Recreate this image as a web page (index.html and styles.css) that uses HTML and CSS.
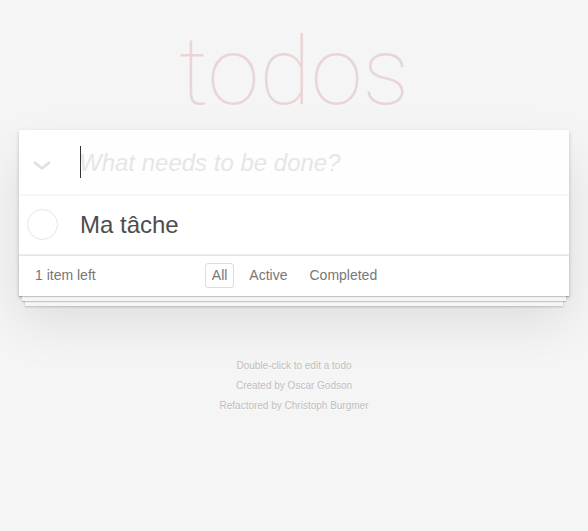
FILE: index.html
```html
<!DOCTYPE html>
<html lang="fr">
<head>
<meta charset="utf-8">
<title>todos</title>
<link rel="stylesheet" href="styles.css">
</head>
<body>
<div class="page">
  <h1 class="title">todos</h1>
  <section class="todoapp">
    <header class="header">
      <div class="toggle-all">
        <svg width="18" height="9" viewBox="0 0 18 9"><path d="M1.2 1 L9 7.4 L16.8 1" fill="none" stroke="#e0e0e0" stroke-width="2.6" stroke-linejoin="miter"/></svg>
      </div>
      <div class="input-wrap">
        <span class="caret"></span>
        <input class="new-todo" placeholder="What needs to be done?">
      </div>
    </header>
    <ul class="todo-list">
      <li class="todo">
        <div class="toggle"><span class="circle"></span></div>
        <label class="todo-label">Ma tâche</label>
      </li>
    </ul>
    <footer class="footer">
      <span class="todo-count">1 item left</span>
      <ul class="filters">
        <li><a class="filter selected">All</a></li>
        <li><a class="filter">Active</a></li>
        <li><a class="filter">Completed</a></li>
      </ul>
      <span class="spacer"></span>
    </footer>
  </section>
  <footer class="info">
    <p class="info-line">Double-click to edit a todo</p>
    <p class="info-line">Created by <a class="info-link">Oscar Godson</a></p>
    <p class="info-line">Refactored by <a class="info-link">Christoph Burgmer</a></p>
  </footer>
</div>
</body>
</html>
```
FILE: styles.css
```css
html, body {
  margin: 0;
  padding: 0;
}
body {
  font: 14px "Liberation Sans", Arial, sans-serif;
  line-height: 1.4em;
  background: #f5f5f5;
  color: #4d4d4d;
}
.page {
  width: 550px;
  margin: 0 auto;
  padding-top: 22px;
}
.title {
  margin: 0;
  font-family: Roboto, "Liberation Sans", sans-serif;
  font-size: 94px;
  font-weight: 100;
  line-height: 100px;
  text-align: center;
  color: rgba(175, 47, 47, 0.16);
}
.todoapp {
  background: #fff;
  margin: 8px 0 40px 0;
  box-shadow: 0 2px 4px 0 rgba(0, 0, 0, 0.2), 0 25px 50px 0 rgba(0, 0, 0, 0.1);
}
.header {
  display: flex;
  align-items: center;
  box-shadow: inset 0 -2px 1px rgba(0, 0, 0, 0.03);
}
.toggle-all {
  width: 60px;
  height: 65.6px;
  display: flex;
  align-items: center;
  padding-top: 5px;
  box-sizing: border-box;
}
.toggle-all svg {
  display: block;
  margin-left: 14px;
}
.input-wrap {
  flex: 1;
  position: relative;
}
.caret {
  position: absolute;
  left: 1px;
  top: 16px;
  width: 1px;
  height: 32px;
  background: #333;
}
.new-todo {
  display: block;
  width: 100%;
  box-sizing: border-box;
  margin: 0;
  padding: 16px 16px 16px 0;
  border: none;
  outline: none;
  background: rgba(0, 0, 0, 0.003);
  font-family: "Liberation Sans", Arial, sans-serif;
  font-size: 24px;
  line-height: 1.4em;
  height: 65.6px;
  color: #4d4d4d;
}
.new-todo::placeholder {
  font-style: italic;
  font-weight: 300;
  color: #e6e6e6;
}
.todo-list {
  margin: 0;
  padding: 0;
  list-style: none;
}
.todo {
  display: flex;
  align-items: center;
  border-bottom: 1px solid #ededed;
  font-size: 24px;
}
.toggle {
  width: 61px;
  display: flex;
  align-items: center;
}
.circle {
  width: 31px;
  height: 31px;
  margin-left: 8px;
  border-radius: 50%;
  border: 1px solid #e6e6e6;
  box-sizing: border-box;
}
.todo-label {
  padding: 15px 15px 15px 0;
  line-height: 1.2;
  color: #4d4d4d;
}
.footer {
  display: grid;
  grid-template-columns: 1fr auto 1fr;
  grid-template-rows: 20px;
  align-items: center;
  padding: 10px 15px;
  height: 20px;
  color: #777;
  border-top: 1px solid #e6e6e6;
  box-shadow: 0 1px 1px rgba(0, 0, 0, 0.2),
    0 8px 0 -3px #f6f6f6,
    0 9px 1px -3px rgba(0, 0, 0, 0.2),
    0 16px 0 -6px #f6f6f6,
    0 17px 2px -6px rgba(0, 0, 0, 0.2);
  background: #fff;
  position: relative;
}
.todo-count {
  text-align: left;
  padding-left: 1px;
  margin-top: -1px;
}
.filters {
  margin: -1px 0 0 1px;
  padding: 0;
  list-style: none;
  display: flex;
  align-items: center;
  gap: 2px;
}
.filter {
  display: block;
  color: #777;
  margin: 0 3px;
  padding: 2px 6px 2px;
  line-height: 19px;
  border: 1px solid transparent;
  border-radius: 3px;
}
.filter.selected {
  border-color: rgba(175, 47, 47, 0.2);
}
.info {
  margin: 65px auto 0;
  color: #bfbfbf;
  font-size: 10px;
  text-shadow: 0 1px 0 rgba(255, 255, 255, 0.5);
  text-align: center;
}
.info-line {
  margin: 10px 0;
  line-height: 1;
}
.info-link {
  color: inherit;
  text-decoration: none;
}
```
